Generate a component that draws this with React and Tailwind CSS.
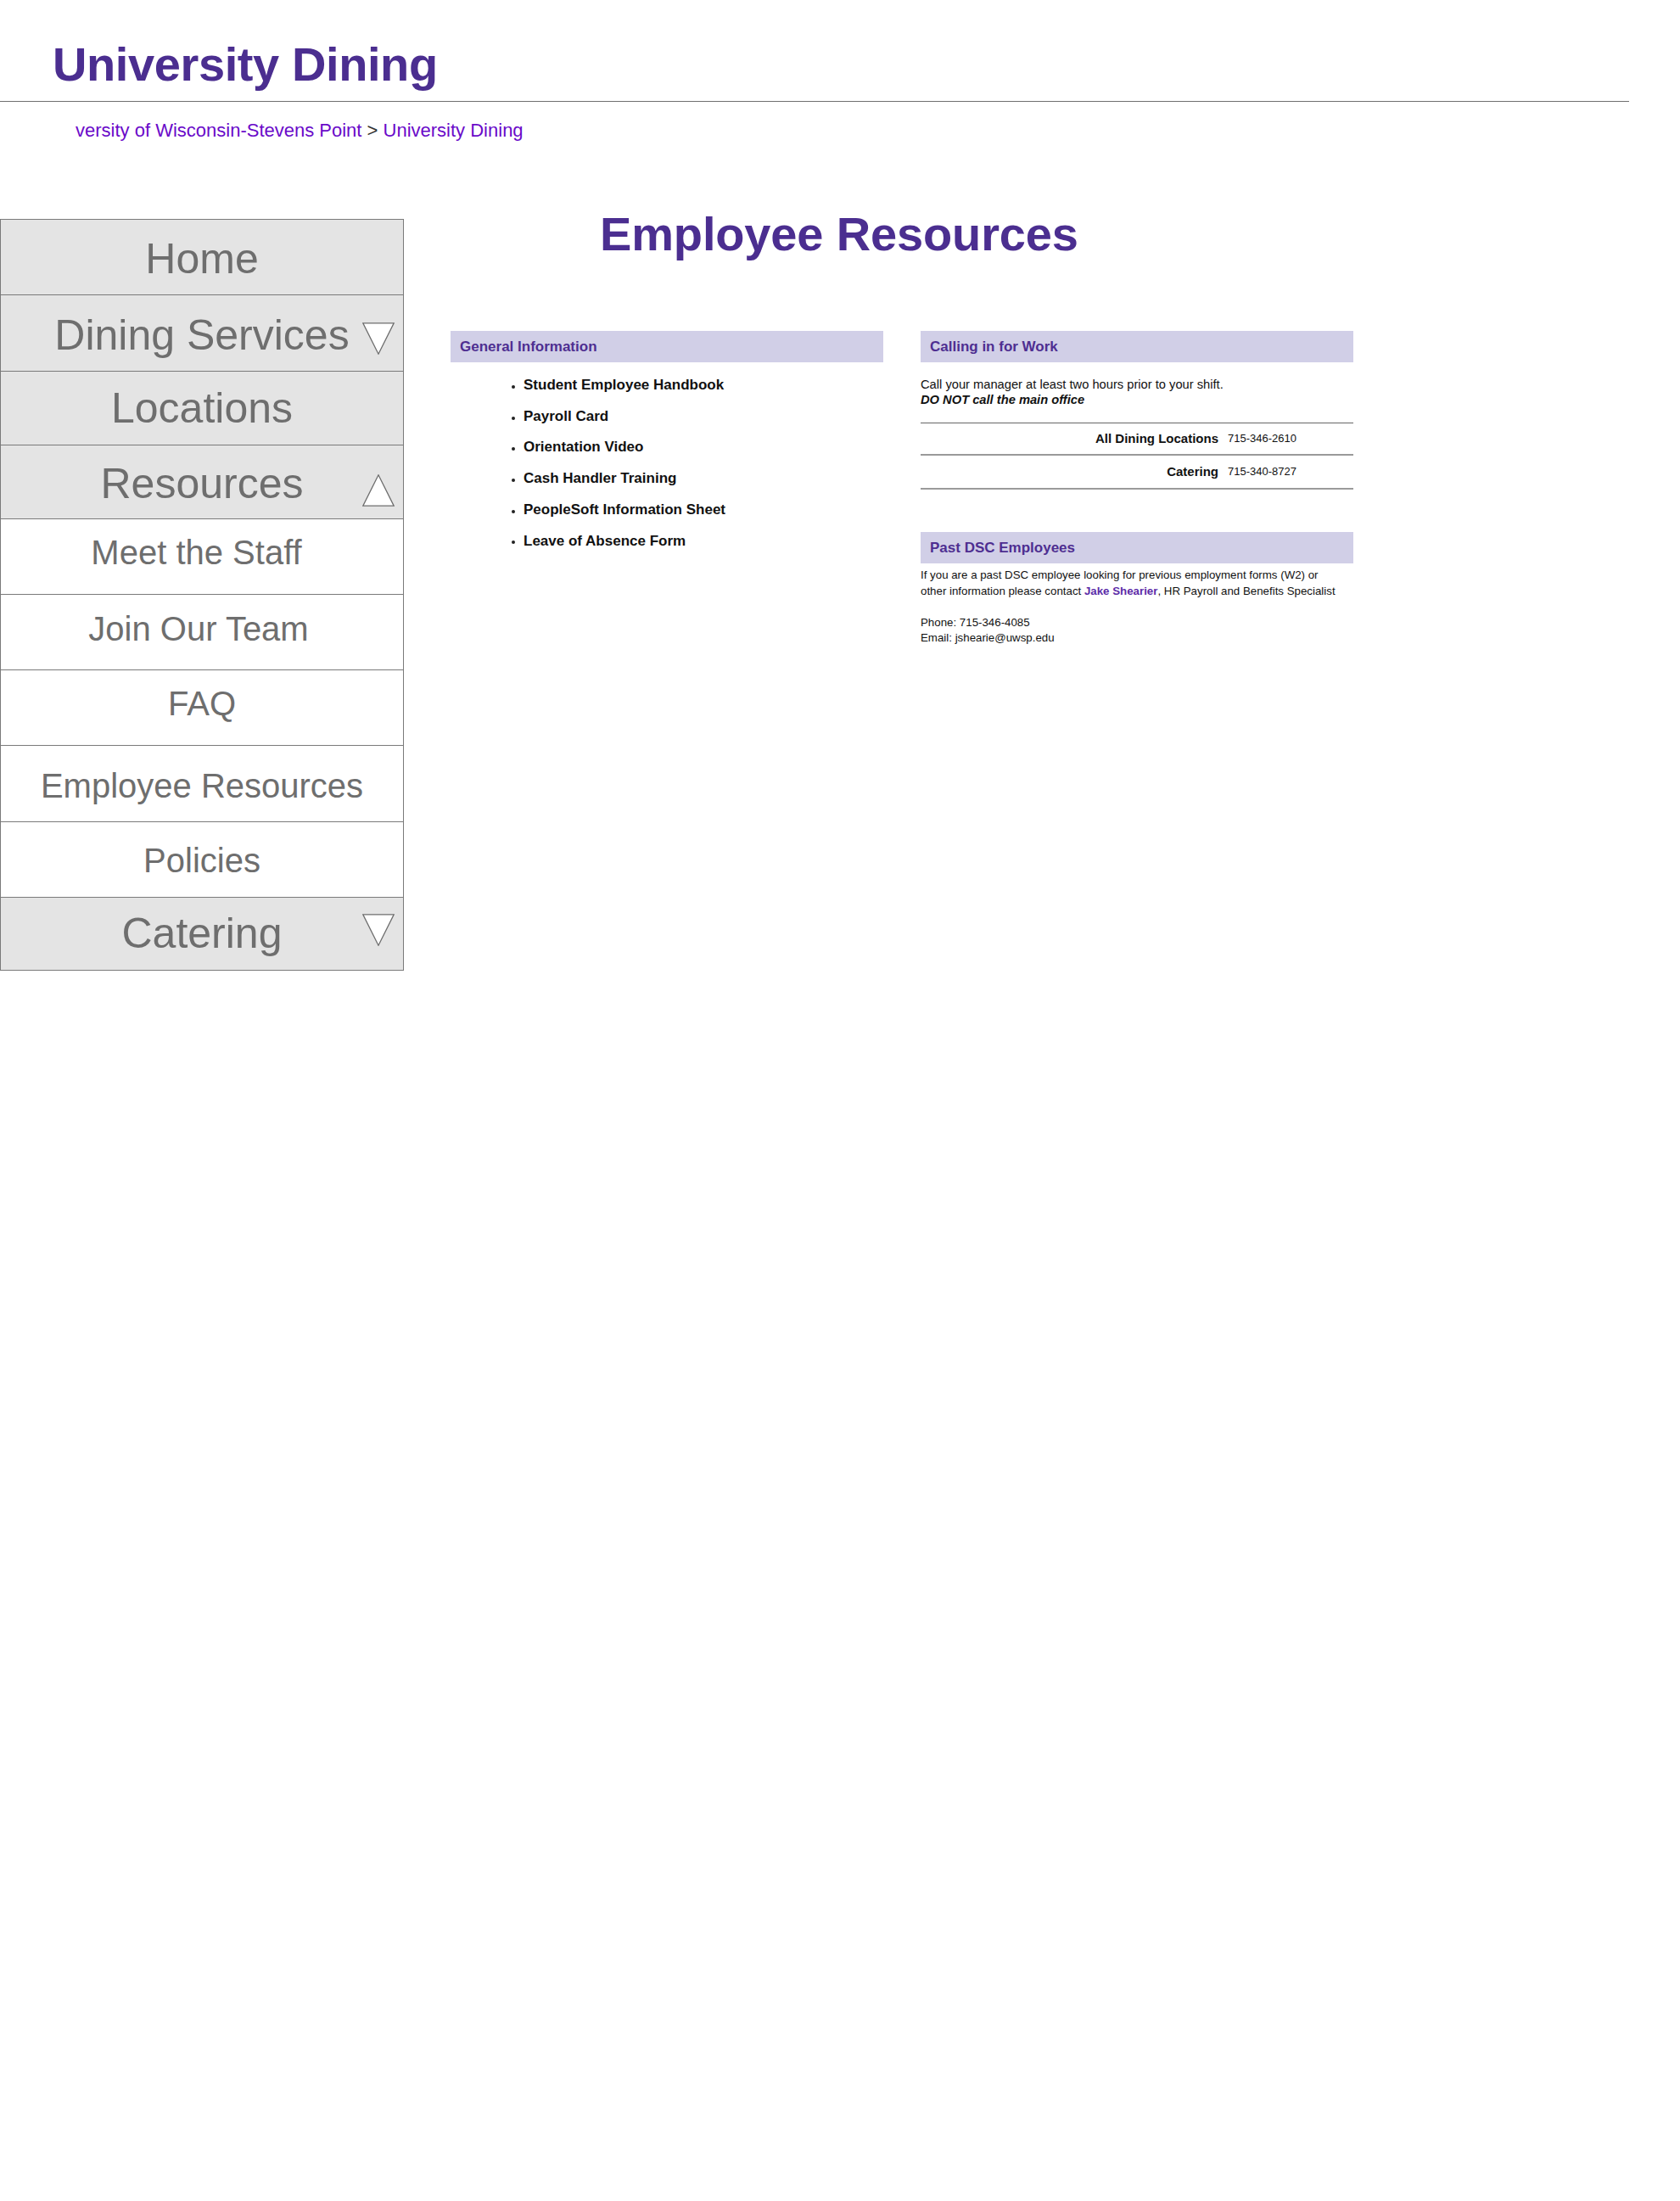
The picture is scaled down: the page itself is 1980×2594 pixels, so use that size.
import React from "react";

const Tri = ({ up }) => (
  <svg width="38" height="38" viewBox="0 0 38 38">
    <polygon
      points={up ? "19,0.8 37.2,37.2 0.8,37.2" : "0.8,0.8 37.2,0.8 19,37.2"}
      fill="white"
      stroke="#6e6e6e"
      strokeWidth="1.3"
    />
  </svg>
);

const navItems = [
  { label: "Home", h: "h-[89px]", pt: "pt-[21px]", gray: true, big: true },
  { label: "Dining Services", h: "h-[90px]", pt: "pt-[22px]", gray: true, big: true, tri: "down", triTop: "top-[32px]" },
  { label: "Locations", h: "h-[87px]", pt: "pt-[18px]", gray: true, big: true },
  { label: "Resources", h: "h-[87px]", pt: "pt-[20px]", gray: true, big: true, tri: "up", triTop: "top-[34px]" },
  { label: "Meet the Staff", h: "h-[89px]", pt: "pt-[19px]", pr: "pr-[13px]" },
  { label: "Join Our Team", h: "h-[89px]", pt: "pt-[20px]", pr: "pr-[8px]" },
  { label: "FAQ", h: "h-[89px]", pt: "pt-[19px]" },
  { label: "Employee Resources", h: "h-[90px]", pt: "pt-[27px]" },
  { label: "Policies", h: "h-[89px]", pt: "pt-[25px]" },
  { label: "Catering", h: "h-[86px]", pt: "pt-[17px]", gray: true, big: true, tri: "down", triTop: "top-[19px]" },
];

const listItems = [
  "Student Employee Handbook",
  "Payroll Card",
  "Orientation Video",
  "Cash Handler Training",
  "PeopleSoft Information Sheet",
  "Leave of Absence Form",
];

function Bar({ children }) {
  return (
    <div className="h-[37px] bg-[#d1cfe7] px-[11px] text-[17px] leading-[37px] font-bold text-[#4e2e91]">
      {children}
    </div>
  );
}

export default function App() {
  return (
    <div
      className="min-h-[2594px] bg-white"
      style={{ fontFamily: '"Liberation Sans", Arial, Helvetica, sans-serif' }}
    >
      <div className="w-[1920px]">
        <h1 className="pt-[48px] pl-[62px] text-[56px] leading-[56px] font-bold tracking-[-0.4px] text-[#4b2e90]">
          University Dining
        </h1>
        <div className="mt-[15px] h-px bg-[#707070]" />
        <div className="mt-[21px] pl-[89px] text-[22px] leading-[26px] text-[#6a0ac9]">
          <span>versity of Wisconsin-Stevens Point</span>
          <span className="text-[#333333]"> &gt; </span>
          <span>University Dining</span>
        </div>
      </div>

      <div className="mt-[81px] flex items-start">
        <nav className="mt-[10px] w-[476px] shrink-0 border-x border-t border-[#7a7a7a]">
          {navItems.map((it) => (
            <div
              key={it.label}
              className={`relative ${it.h} ${it.pt} ${it.pr || ""} border-b border-[#7a7a7a] text-center text-[#6e6e6e] ${
                it.gray ? "bg-[#e4e4e4]" : "bg-white"
              } ${it.big ? "text-[50px] leading-[50px]" : "text-[40px] leading-[40px]"}`}
            >
              {it.label}
              {it.tri && (
                <div className={`absolute right-[10px] ${it.triTop} leading-none`}>
                  <Tri up={it.tri === "up"} />
                </div>
              )}
            </div>
          ))}
        </nav>

        <main className="pl-[55px]">
          <h2 className="pl-[176px] text-[56px] leading-[56px] font-bold tracking-[-0.15px] text-[#4b2e90]">
            Employee Resources
          </h2>

          <div className="mt-[86px] flex gap-[44px]">
            <section className="w-[510px]">
              <Bar>General Information</Bar>
              <ul className="mt-[9px] pl-[72px]">
                {listItems.map((t) => (
                  <li key={t} className="flex items-center text-[17px] leading-[36.7px] font-bold text-[#111111]">
                    <span className="mr-[10px] mt-[3px] h-[4px] w-[4px] rounded-full bg-[#222222]" />
                    {t}
                  </li>
                ))}
              </ul>
            </section>

            <section className="w-[510px]">
              <Bar>Calling in for Work</Bar>
              <p className="mt-[17px] text-[14.7px] leading-[18px] text-[#111111]">
                Call your manager at least two hours prior to your shift.
                <br />
                <b>
                  <i>DO NOT call the main office</i>
                </b>
              </p>
              <div className="mt-[18px] border-t border-[#666666]">
                <div className="grid h-[38px] grid-cols-[1fr_152px] items-center border-b-2 border-[#9a9a9a]">
                  <div className="pr-[7px] text-right text-[15px] font-bold text-[#111111]">All Dining Locations</div>
                  <div className="pl-[4px] text-[13px] text-[#111111]">715-346-2610</div>
                </div>
                <div className="grid h-[40px] grid-cols-[1fr_152px] items-center border-b-2 border-[#9a9a9a]">
                  <div className="pr-[7px] text-right text-[15px] font-bold text-[#111111]">Catering</div>
                  <div className="pl-[4px] text-[13px] text-[#111111]">715-340-8727</div>
                </div>
              </div>

              <div className="mt-[50px]">
                <Bar>Past DSC Employees</Bar>
                <p className="mt-[5px] text-[13.3px] leading-[18.5px] text-[#111111]">
                  If you are a past DSC employee looking for previous employment forms (W2) or
                  <br />
                  other information please contact{" "}
                  <b className="text-[#5c2ca8]">Jake Shearier</b>, HR Payroll and Benefits Specialist
                  <br />
                  <br />
                  Phone: 715-346-4085
                  <br />
                  Email: jshearie@uwsp.edu
                </p>
              </div>
            </section>
          </div>
        </main>
      </div>
    </div>
  );
}
